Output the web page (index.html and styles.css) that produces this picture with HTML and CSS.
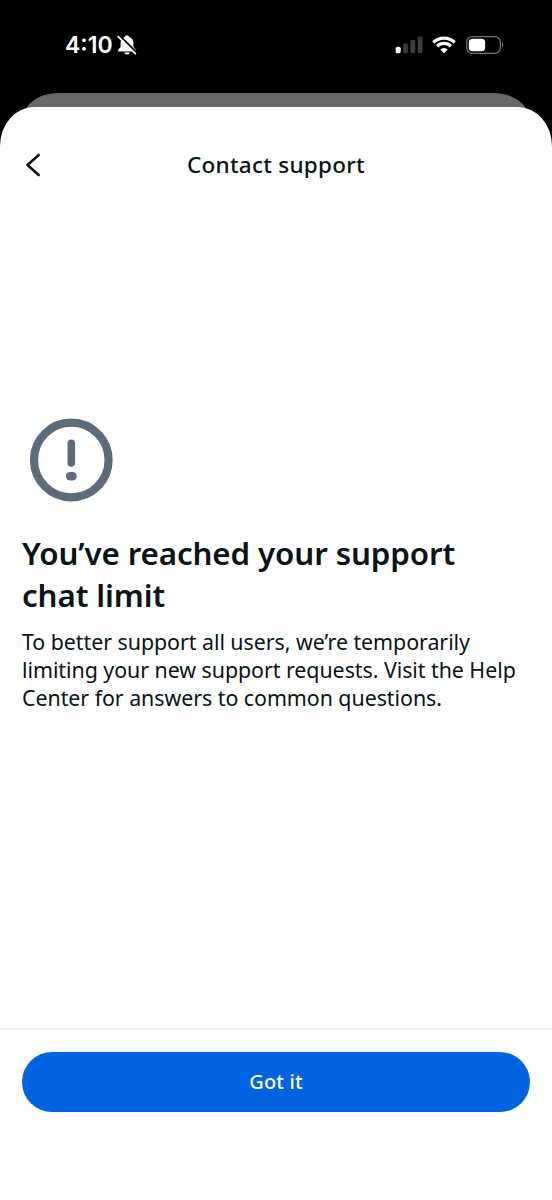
FILE: index.html
```html
<!DOCTYPE html>
<html lang="en">
<head>
<meta charset="utf-8">
<title>Contact support</title>
<link rel="stylesheet" href="styles.css">
</head>
<body>
<div class="phone">
  <header class="status">
    <div class="clock"><span class="time">4:10</span>
      <svg class="bell" viewBox="0 0 20 22" width="20" height="22"><path d="M10 1.2C8.8 1.2 8 2 7.8 3 4.8 3.8 3.6 6.2 3.6 9v3.2c0 1.7-2.6 3-2.6 4.4 0 .6.4.9 1 .9h16c.6 0 1-.3 1-.9 0-1.4-2.6-2.7-2.6-4.4V9c0-2.800-1.200-5.200-4.200-6C12 2 11.200 1.200 10 1.200zM7.200 18.600h5.600c-.3 1.300-1.400 2-2.800 2s-2.500-.7-2.800-2z" fill="#fff"/><path d="M2.600 1.600 19.200 18.200" stroke="#000" stroke-width="2"/><path d="M1.200 2.600 18.400 19.600" stroke="#fff" stroke-width="1.700" stroke-linecap="round"/></svg>
    </div>
    <div class="indicators">
      <svg viewBox="0 0 28 18" width="28" height="18"><rect x="0.700" y="10.700" width="5" height="6.600" rx="1.500" fill="#fff"/><g fill="#3d3d3d"><rect x="8.200" y="7.500" width="4.700" height="9.800" rx="1.300"/><rect x="15.500" y="4" width="4.700" height="13.300" rx="1.300"/><rect x="22.800" y="0.500" width="4.700" height="16.800" rx="1.300"/></g></svg>
      <svg class="wifi" viewBox="0 0 24 18" width="24" height="18"><g fill="none" stroke="#fff" stroke-width="3.300"><path d="M1.300 6.400a15.300 15.300 0 0 1 21.400 0"/><path d="M5.100 10.300a9.800 9.800 0 0 1 13.800 0"/></g><path d="M12 17.200 8.300 13.500a5.300 5.300 0 0 1 7.400 0z" fill="#fff"/></svg>
      <svg class="battery" viewBox="0 0 38 18" width="38" height="18"><rect x="0.700" y="0.700" width="33.600" height="16.600" rx="5.500" fill="none" stroke="#717171" stroke-width="1.300"/><rect x="2.800" y="2.700" width="16.400" height="12.600" rx="3.700" fill="#fff"/><path d="M35.800 6.300v5.400c1.900-.8 1.900-4.600 0-5.400z" fill="#717171"/></svg>
    </div>
  </header>
  <div class="backdrop"></div>
  <main class="sheet">
    <div class="nav">
      <svg class="back" viewBox="0 0 16 24" width="16" height="24"><path d="M13.700 2 2.500 12l11.200 10" fill="none" stroke="#0a1317" stroke-width="2.600" stroke-linecap="round" stroke-linejoin="round"/></svg>
      <div class="title">Contact support</div>
    </div>
    <section class="content">
      <svg class="alert" viewBox="0 0 84 84" width="84" height="84"><circle cx="42.300" cy="42" r="37.300" fill="none" stroke="#5d6c7b" stroke-width="8.200"/><path d="M42.300 25.200V45" stroke="#5d6c7b" stroke-width="7.600" stroke-linecap="round"/><rect x="36.900" y="54" width="10.800" height="8.400" rx="4.200" fill="#5d6c7b"/></svg>
      <h1>You’ve reached your support<br>chat limit</h1>
      <p>To better support all users, we’re temporarily<br>limiting your new support requests. Visit the Help<br>Center for answers to common questions.</p>
    </section>
    <footer class="actions"><button type="button">Got it</button></footer>
  </main>
</div>
</body>
</html>
```
FILE: styles.css
```css
* { box-sizing: border-box; }
body { margin: 0; background: #000; font-family: "Noto Sans", sans-serif; color: #0a1317; }
.phone { width: 552px; height: 1200px; display: flex; flex-direction: column; background: #000; overflow: hidden; }
.status { height: 93px; padding: 34px 48px 0 65px; display: flex; justify-content: space-between; align-items: flex-start; color: #fff; }
.clock { display: flex; align-items: center; height: 22px; }
.time { font: 600 23px/22px Inter, sans-serif; letter-spacing: 0; width: 52px; white-space: nowrap; }
.indicators { display: flex; align-items: center; height: 22px; }
.wifi { margin-left: 9px; }
.battery { margin-left: 10px; }
.backdrop { flex: none; height: 40px; margin: 0 24px -26px; background: #686868; border-radius: 34px 34px 0 0 / 24px 24px 0 0; }
.sheet { flex: 1; background: #fff; border-radius: 34px 34px 0 0 / 39px 39px 0 0; display: flex; flex-direction: column; }
.nav { height: 115px; flex: none; display: grid; grid-template-columns: 60px 1fr 60px; align-items: center; }
.back { margin-left: 25px; }
.title { text-align: center; font-size: 22.500px; font-weight: 500; line-height: 30px; letter-spacing: 0.27px; }
.content { flex: 1; padding: 196px 22px 0; }
.alert { display: block; margin-left: 7px; }
h1 { margin: 30px 0 0; font-size: 31.300px; line-height: 42px; font-weight: 600; letter-spacing: -0.11px; white-space: nowrap; }
p { margin: 12px 0 0; font-size: 21.400px; line-height: 28.200px; letter-spacing: -0.05px; white-space: nowrap; }
.actions { height: 172px; flex: none; border-top: 2px solid #f2f3f4; padding: 22px 22px 0; }
button { display: block; width: 100%; height: 60px; padding: 0 0 1px; border: 0; border-radius: 30px; background: #0064e0; color: #fff; font: 500 20px/58px "Noto Sans", sans-serif; letter-spacing: 0.15px; }
```
